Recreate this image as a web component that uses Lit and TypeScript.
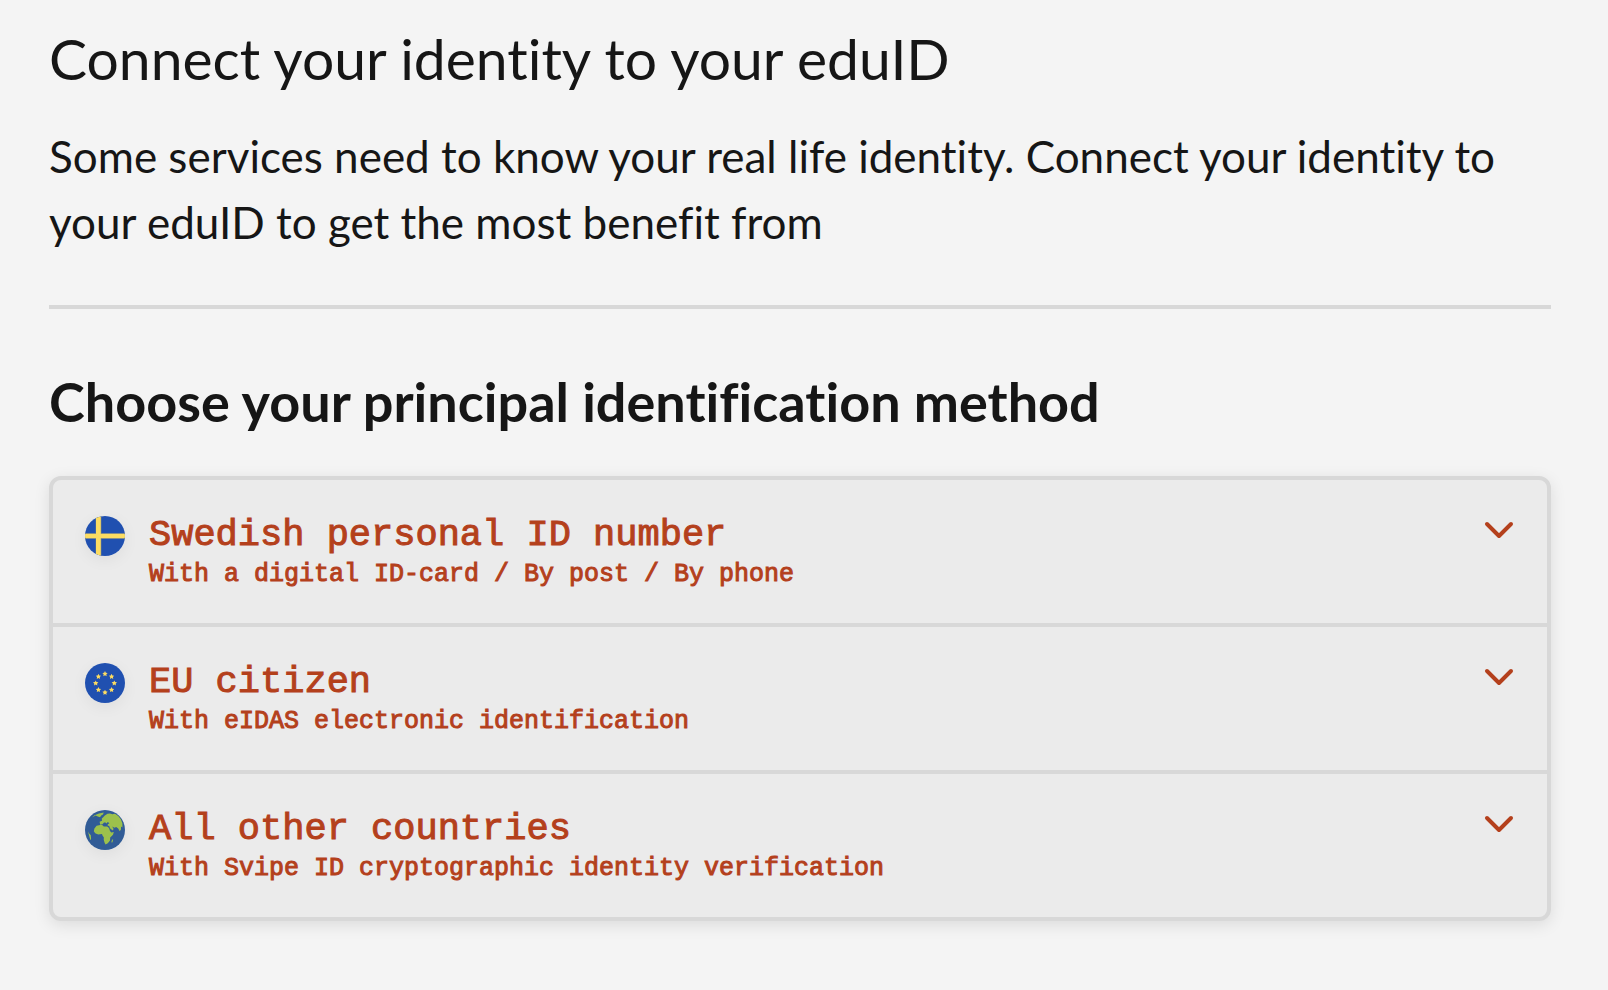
import { LitElement, html, css, svg } from "lit";
import { customElement, state } from "lit/decorators.js";

type Flag = "sweden" | "eu" | "world";

interface Method {
  id: string;
  flag: Flag;
  title: string;
  detail: string;
}

const METHODS: Method[] = [
  {
    id: "se",
    flag: "sweden",
    title: "Swedish personal ID number",
    detail: "With a digital ID-card / By post / By phone",
  },
  {
    id: "eu",
    flag: "eu",
    title: "EU citizen",
    detail: "With eIDAS electronic identification",
  },
  {
    id: "world",
    flag: "world",
    title: "All other countries",
    detail: "With Svipe ID cryptographic identity verification",
  },
];

// Five-pointed star centred on (cx, cy).
const star = (cx: number, cy: number, r: number) =>
  Array.from({ length: 10 }, (_, i) => {
    const radius = i % 2 ? r * 0.5 : r;
    const angle = (Math.PI / 5) * i - Math.PI / 2;
    return `${(cx + radius * Math.cos(angle)).toFixed(2)},${(cy + radius * Math.sin(angle)).toFixed(2)}`;
  }).join(" ");

const FLAGS = {
  sweden: svg`
    <rect width="40" height="40" fill="#2050b0" />
    <path d="M10.5 0h6v40h-6z" fill="#5f7594" />
    <path d="M0 17h40v6H0z" fill="#5f7594" />
    <path d="M11 0h4.8v40H11z" fill="#fcdc62" />
    <path d="M0 17.7h40v4.6H0z" fill="#fcdc62" />`,
  eu: svg`
    <rect width="40" height="40" fill="#2050b0" />
    ${Array.from({ length: 8 }, (_, i) => {
      const a = (Math.PI / 4) * i;
      return svg`<polygon points=${star(20 + 9.3 * Math.sin(a), 20.2 - 9.3 * Math.cos(a), 2.8)} fill="#fcdc62" />`;
    })}`,
  world: svg`
    <rect width="40" height="40" fill="#315c96" />
    <g fill="#9cc14c">
      <path d="M7 7.6 9.5 5.3 14 3.5 18.7 2.4 18 4.6 16.2 5.4 15 7.2 12.8 6.6 10.6 5.6z" />
      <path d="M14.6 11.7 17 10.8 16.8 8.4 18.2 7.2 19.8 5.5 22.5 3.8 25 3.4 27.3 4.2 30 3.8 33.5 6.2 36 9.6 37.4 13.6 37.4 17.5 36 16.6 36 19.5 34.7 21.2 33.2 18.6 31.2 17 29.4 17.8 27.2 16.4 28.6 19 27.6 20.4 25 18.2 24.2 16 22.6 15.6 22.8 14.2 24.4 13.2 22.8 12 21.4 13.6 20.5 12.5 19 12.6 17.5 14.2 15.2 14.7z" />
      <path d="M11.6 15.8 15.2 15.1 17.2 15 18.8 16.5 22.2 16.4 24 18 25 21 26.3 22.5 28.8 22.1 28 24.7 25.2 27.6 25 30.4 22.8 33.2 20.5 34.5 19.5 32.6 18.7 29.4 18.9 27.5 17.5 25.4 17 24.1 13.2 24.6 10.2 23.3 8.8 21.2 9.4 18.4z" />
      <path d="M27.1 29.8 28.2 29.3 27.4 32.4 26.3 32.3z" />
      <path d="M3 21.5 4.2 23.5 5.8 25.2 6.1 29.2 5.3 30z" />
    </g>`,
};

@customElement("app-root")
export class AppRoot extends LitElement {
  static styles = css`
    :host {
      display: block;
      box-sizing: border-box;
      min-height: 100vh;
      padding: 22px 57px 69px 49px;
      background: #f4f4f4;
      color: #161616;
      font-family: Lato, "Open Sans", sans-serif;
      font-variant-ligatures: none;
    }
    .heading {
      margin: 0;
      font-size: 57px;
      font-weight: 400;
      line-height: 72px;
    }
    .lead {
      margin: 29px 0 50px;
      font-size: 44px;
      line-height: 66px;
    }
    .rule {
      height: 4px;
      margin: 0;
      border: 0;
      background: #d8d8d8;
    }
    .subheading {
      margin: 58px 0 39px;
      font-size: 54px;
      font-weight: 700;
      line-height: 70px;
    }
    .methods {
      margin: 0;
      padding: 0;
      list-style: none;
      overflow: hidden;
      border: 4px solid #d8d8d8;
      border-radius: 12px;
      background: #ebebeb;
      box-shadow: 0 4px 16px rgba(0, 0, 0, 0.1);
    }
    .method + .method {
      border-top: 4px solid #d8d8d8;
    }
    .toggle {
      display: flex;
      align-items: flex-start;
      gap: 24px;
      width: 100%;
      padding: 32px;
      border: 0;
      background: none;
      color: #b4401c;
      font-family: "Liberation Mono", monospace;
      -webkit-text-stroke: 1px #b4401c;
      text-align: left;
      cursor: pointer;
    }
    .flag {
      flex: none;
      width: 40px;
      height: 40px;
      margin-top: 4px;
      border-radius: 50%;
      box-shadow: 0 4px 16px rgba(0, 0, 0, 0.06);
    }
    .text {
      flex: 1;
      display: flex;
      flex-direction: column;
      min-width: 0;
    }
    .title {
      font-size: 37px;
      line-height: 46px;
    }
    .detail {
      font-size: 25px;
      line-height: 33px;
    }
    .chevron {
      flex: none;
      width: 32px;
      height: 32px;
      margin-top: 2px;
    }
    .open .chevron {
      transform: rotate(180deg);
    }
  `;

  @state() private open = "";

  private toggle(id: string) {
    this.open = this.open === id ? "" : id;
  }

  render() {
    return html`
      <main>
        <h1 class="heading">Connect your identity to your eduID</h1>
        <p class="lead">
          Some services need to know your real life identity. Connect your
          identity to your eduID to get the most benefit from
        </p>
        <hr class="rule" />
        <h2 class="subheading">Choose your principal identification method</h2>
        <ul class="methods">
          ${METHODS.map(
            (m) => html`
              <li class="method ${this.open === m.id ? "open" : ""}">
                <button
                  class="toggle"
                  type="button"
                  aria-expanded=${this.open === m.id}
                  @click=${() => this.toggle(m.id)}
                >
                  <svg class="flag" viewBox="0 0 40 40" aria-hidden="true">
                    ${FLAGS[m.flag]}
                  </svg>
                  <span class="text">
                    <span class="title">${m.title}</span>
                    <span class="detail">${m.detail}</span>
                  </span>
                  <svg class="chevron" viewBox="0 0 32 32" aria-hidden="true">
                    <path
                      d="M4 10 16 22 28 10"
                      fill="none"
                      stroke="#b4401c"
                      stroke-width="4"
                      stroke-linecap="round"
                      stroke-linejoin="round"
                    />
                  </svg>
                </button>
              </li>
            `
          )}
        </ul>
      </main>
    `;
  }
}
